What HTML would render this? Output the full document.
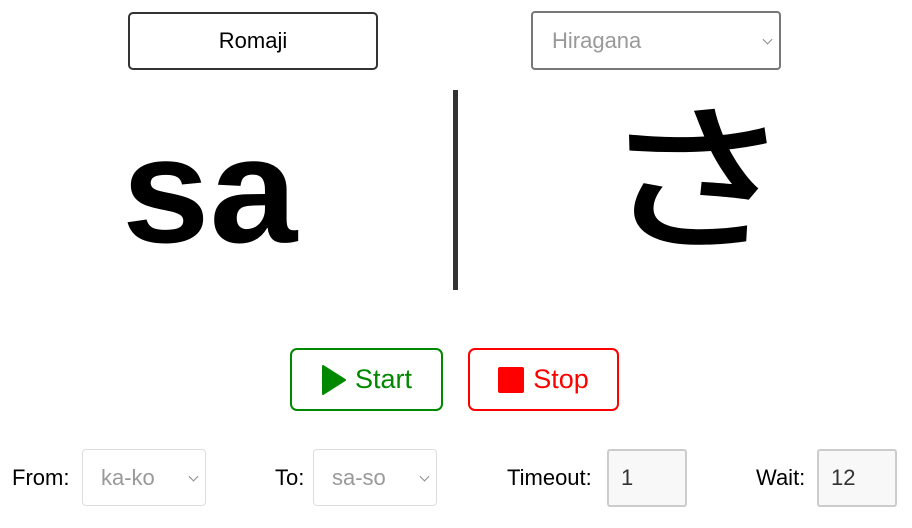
<!DOCTYPE html>
<html><head><meta charset="utf-8"><style>
body{margin:0;width:912px;height:528px;background:#fff;font-family:"Liberation Sans",Arial,sans-serif;position:relative;overflow:hidden}
.a{position:absolute;box-sizing:border-box}
.lbl{font-size:22px;color:#000}
.sel{border:1px solid #ddd;border-radius:4px;color:#999;font-size:22px;padding-left:18px;display:flex;align-items:center}
.chev{position:absolute;right:8px;top:50%;width:6px;height:6px;border-right:1.3px solid #888;border-bottom:1.3px solid #888;transform:translateY(-70%) rotate(45deg)}
.inp{border:2px solid #ccc;border-radius:3px;background:#f8f8f8;font-size:22px;color:#333;padding-left:12px;display:flex;align-items:center}
</style></head><body>
<div class="a" style="left:128px;top:12px;width:250px;height:58px;border:2px solid #333;border-radius:5px;display:flex;align-items:center;justify-content:center;font-size:22px">Romaji</div>
<div class="a sel" style="left:531px;top:11px;width:250px;height:59px;border:2px solid #777;padding-left:19px">Hiragana<span class="chev"></span></div>
<div class="a" style="left:122px;top:115px;font-size:150px;font-weight:bold;line-height:1;transform:scaleX(1.05);transform-origin:0 0">sa</div>
<div class="a" style="left:453px;top:90px;width:5px;height:200px;background:#333"></div>
<div class="a" style="left:600px;top:68px;font-size:159px;font-weight:500;line-height:200px;font-family:'Noto Sans CJK JP',sans-serif;transform:scaleX(1.21);transform-origin:0 0">さ</div>
<div class="a" style="left:290px;top:348px;width:153px;height:63px;border:2px solid #080;border-radius:7px;color:#080;font-size:27px;display:flex;align-items:center;justify-content:center">
<svg width="26" height="30" viewBox="0 0 26 30" style="margin-right:8px"><path d="M2 1 L24 15 L2 29 Z" fill="#080" stroke="#080" stroke-linejoin="round" stroke-width="2"/></svg>Start</div>
<div class="a" style="left:468px;top:348px;width:151px;height:63px;border:2px solid red;border-radius:7px;color:red;font-size:27px;display:flex;align-items:center;justify-content:center">
<span style="display:inline-block;width:26px;height:26px;background:red;border-radius:2px;margin-right:9px"></span>Stop</div>
<div class="a lbl" style="left:12px;top:465px">From:</div>
<div class="a sel" style="left:82px;top:449px;width:124px;height:57px">ka-ko<span class="chev"></span></div>
<div class="a lbl" style="left:275px;top:465px">To:</div>
<div class="a sel" style="left:313px;top:449px;width:124px;height:57px">sa-so<span class="chev"></span></div>
<div class="a lbl" style="left:507px;top:465px">Timeout:</div>
<div class="a inp" style="left:607px;top:449px;width:80px;height:58px">1</div>
<div class="a lbl" style="left:756px;top:465px">Wait:</div>
<div class="a inp" style="left:817px;top:449px;width:80px;height:58px">12</div>
</body></html>
